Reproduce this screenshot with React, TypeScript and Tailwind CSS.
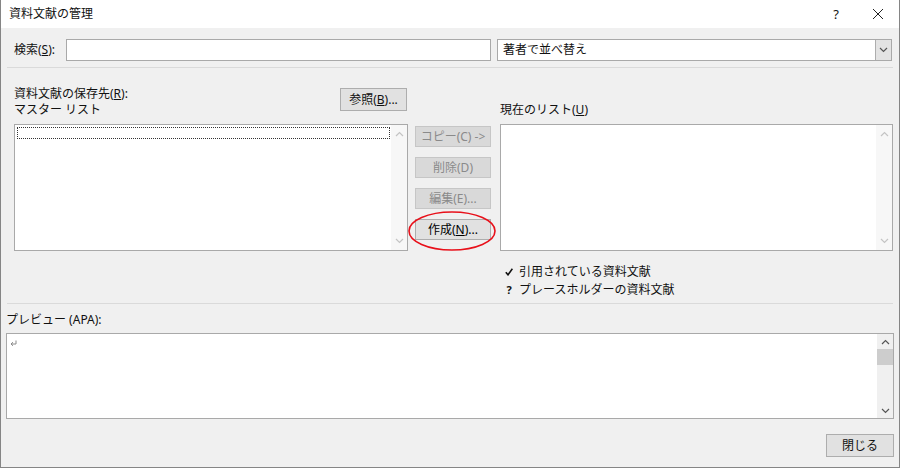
const font = "font-['Noto_Sans','Noto_Sans_CJK_JP',sans-serif]"

const ChevronUp = ({ color }: { color: string }) => (
  <svg width="9" height="6" viewBox="0 0 9 6">
    <path d="M1 5 L4.5 1.5 L8 5" fill="none" stroke={color} strokeWidth="1.2" />
  </svg>
)

const ChevronDown = ({ color }: { color: string }) => (
  <svg width="9" height="6" viewBox="0 0 9 6">
    <path d="M1 1 L4.5 4.5 L8 1" fill="none" stroke={color} strokeWidth="1.2" />
  </svg>
)

// Disabled vertical scrollbar used in both list boxes
const DisabledScroll = () => (
  <div className="w-[16px] h-full bg-[#f7f7f7] flex flex-col items-center justify-between py-[6px]">
    <ChevronUp color="#c4c4c4" />
    <ChevronDown color="#c4c4c4" />
  </div>
)

const SideButton = ({ children, disabled }: { children: React.ReactNode; disabled?: boolean }) => (
  <div
    className={
      disabled
        ? 'h-[21px] flex items-center justify-center border border-[#c6c6c6] bg-[#d9d9d9] text-[#8a8a8a]'
        : 'h-[21px] flex items-center justify-center border border-[#adadad] bg-[#e1e1e1] text-black'
    }
  >
    {children}
  </div>
)

export default function App() {
  return (
    <div className={`w-[900px] h-[468px] flex flex-col border-x border-b border-[#858585] text-[12px] text-[#111] ${font}`}>
      {/* Title bar */}
      <div className="h-[28px] bg-white flex items-center shrink-0">
        <span className="pl-[8px] leading-[16px]">資料文献の管理</span>
        <div className="ml-auto flex items-center h-full">
          <span className="w-[16px] text-center text-[13px] leading-[16px]">?</span>
          <div className="ml-[28px] mr-[15px] w-[12px] h-[12px]">
            <svg width="12" height="12" viewBox="0 0 12 12">
              <path d="M1 1 L11 11 M11 1 L1 11" stroke="#222" strokeWidth="1" />
            </svg>
          </div>
        </div>
      </div>

      {/* Body */}
      <div className="flex-1 bg-[#f0f0f0] flex flex-col">
        {/* Search row */}
        <div className="mt-[11px] flex items-center h-[22px] pl-[13px]">
          <span className="w-[52px] leading-[16px]">
            検索(<u>S</u>):
          </span>
          <div className="w-[425px] h-[22px] bg-white border border-[#a9a9a9]" />
          <div className="ml-[6px] w-[395px] h-[22px] bg-white border border-[#a9a9a9] flex items-center">
            <span className="pl-[5px] leading-[16px]">著者で並べ替え</span>
            <div className="ml-auto w-[16px] h-full bg-[#e3e3e3] border-l border-[#adadad] flex items-center justify-center">
              <ChevronDown color="#555" />
            </div>
          </div>
        </div>

        <div className="mt-[6px] mx-[6px] h-px bg-[#dadada]" />

        {/* Lists */}
        <div className="flex items-start pl-[13px]">
          {/* Master list */}
          <div className="w-[394px]">
            <div className="h-[56px] flex justify-between pt-[18px]">
              <div className="leading-[16px]">
                <div>
                  資料文献の保存先(<u>R</u>):
                </div>
                <div>マスター リスト</div>
              </div>
              <div className="mt-[2px] mr-px w-[67px] h-[23px] border border-[#adadad] bg-[#e1e1e1] flex items-center justify-center">
                参照(<u>B</u>)...
              </div>
            </div>
            <div className="h-[127px] bg-white border border-[#a9a9a9] flex">
              <div className="flex-1 pt-[2px] pl-[2px] pr-[1px]">
                <div className="h-[12px] border border-dotted border-[#333]" />
              </div>
              <DisabledScroll />
            </div>
          </div>

          {/* Middle buttons */}
          <div className="relative ml-[7px] w-[76px] pt-[58px] flex flex-col gap-[10px]">
            <SideButton disabled>コピー(C) -&gt;</SideButton>
            <SideButton disabled>削除(D)</SideButton>
            <SideButton disabled>編集(E)...</SideButton>
            <SideButton>
              作成(<u>N</u>)...
            </SideButton>
            <svg className="absolute left-[-8px] top-[142px]" width="92" height="42" viewBox="0 0 92 42">
              <ellipse cx="45" cy="21" rx="43" ry="19" fill="none" stroke="#e8101a" strokeWidth="1.6" />
            </svg>
          </div>

          {/* Current list */}
          <div className="ml-[9px] w-[393px]">
            <div className="h-[56px] pt-[34px] leading-[16px]">
              現在のリスト(<u>U</u>)
            </div>
            <div className="h-[127px] bg-white border border-[#a9a9a9] flex justify-end">
              <DisabledScroll />
            </div>
            <div className="mt-[12px] pl-[5px] leading-[18px]">
              <div className="flex items-center h-[18px]">
                <svg width="8" height="8" viewBox="0 0 8 8">
                  <path d="M0.8 4.2 L3 6.8 L7.4 0.8" fill="none" stroke="#111" strokeWidth="1.6" />
                </svg>
                <span className="ml-[6px]">引用されている資料文献</span>
              </div>
              <div className="flex items-center h-[18px]">
                <span className="w-[8px] text-center text-[11px] font-bold">?</span>
                <span className="ml-[6px]">プレースホルダーの資料文献</span>
              </div>
            </div>
          </div>
        </div>

        <div className="mt-[4px] mx-[6px] h-px bg-[#dadada]" />

        {/* Preview */}
        <div className="mt-[8px] pl-[5px] leading-[16px]">プレビュー (APA):</div>
        <div className="mt-[5px] ml-[5px] w-[888px] h-[86px] bg-white border border-[#a9a9a9] flex">
          <div className="flex-1 pl-[3px] pt-[6px]">
            <svg width="7" height="7" viewBox="0 0 7 7">
              <path d="M6 0.5 V4 H1.2 M3 2.2 L1 4 L3 5.8" fill="none" stroke="#8a8a8a" strokeWidth="1" />
            </svg>
          </div>
          <div className="w-[16px] h-full bg-[#f0f0f0] flex flex-col items-center">
            <div className="h-[15px] flex items-center justify-center">
              <ChevronUp color="#555" />
            </div>
            <div className="w-full h-[16px] bg-[#cdcdcd]" />
            <div className="mt-auto h-[15px] flex items-center justify-center">
              <ChevronDown color="#555" />
            </div>
          </div>
        </div>

        {/* Footer */}
        <div className="mt-[15px] self-end mr-[5px] w-[68px] h-[23px] border border-[#adadad] bg-[#e1e1e1] flex items-center justify-center">
          閉じる
        </div>
      </div>
    </div>
  )
}
